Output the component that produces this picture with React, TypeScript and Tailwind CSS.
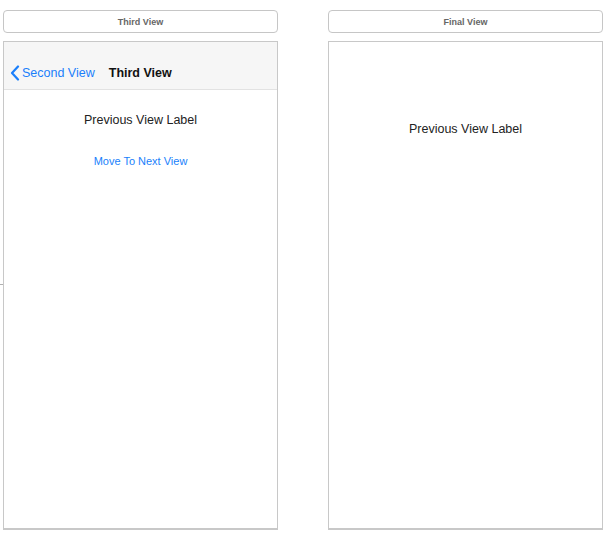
export default function App() {
  return (
    <div className="relative flex h-[538px] w-[613px] gap-[50px] bg-white pl-[3px] pt-[10px] font-['Liberation_Sans',Arial,sans-serif]">
      <span className="absolute left-0 top-[284px] h-px w-[3px] bg-[#b0b0b0]" />
      <div className="flex w-[275px] flex-col gap-[8px]">
        <div className="flex h-[23px] items-center justify-center rounded-[4px] border border-[#c6c6c6] pt-[2px] text-[9px] font-bold text-[#666]">
          Third View
        </div>
        <div className="flex h-[489px] flex-col border border-[#c8c8c8] border-b-2">
          <div className="flex h-[48px] items-end border-b border-[#e2e2e2] bg-[#f6f6f6] pb-[7px]">
            <div className="flex h-[18px] items-center pl-[6px]">
              <svg width="10" height="16" viewBox="0 0 10 16" className="mr-[2px]">
                <path d="M8 1.5 L2 8 L8 14.5" fill="none" stroke="#1a7ffb" strokeWidth="2.2" strokeLinecap="round" strokeLinejoin="round" />
              </svg>
              <span className="text-[12.5px] leading-[16px] text-[#1a7ffb]">Second View</span>
              <span className="ml-[14px] text-[12.5px] font-bold leading-[16px] text-[#111]">Third View</span>
            </div>
          </div>
          <div className="flex flex-col items-center">
            <span className="mt-[22px] text-[12.5px] leading-[16px] text-[#222]">Previous View Label</span>
            <span className="mt-[26px] text-[11px] leading-[14px] text-[#1a7ffb]">Move To Next View</span>
          </div>
        </div>
      </div>
      <div className="flex w-[275px] flex-col gap-[8px]">
        <div className="flex h-[23px] items-center justify-center rounded-[4px] border border-[#c6c6c6] pt-[2px] text-[9px] font-bold text-[#666]">
          Final View
        </div>
        <div className="flex h-[489px] flex-col items-center border border-[#c8c8c8] border-b-2">
          <span className="mt-[79px] text-[12.5px] leading-[16px] text-[#222]">Previous View Label</span>
        </div>
      </div>
    </div>
  );
}
